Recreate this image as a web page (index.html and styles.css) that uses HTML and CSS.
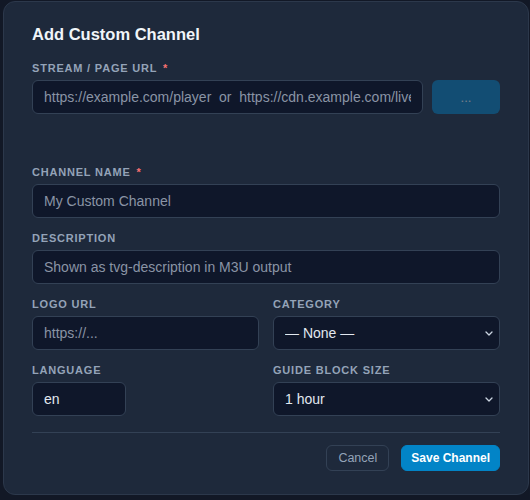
FILE: index.html
```html
<!DOCTYPE html>
<html lang="en">
<head>
    <meta charset="UTF-8">
    <meta name="viewport" content="width=device-width, initial-scale=1.0">
    <title>Add Custom Channel</title>
    <link rel="stylesheet" href="styles.css">
</head>
<body>
    <div class="backdrop">
        <div class="modal">
            <h2 class="modal-title">Add Custom Channel</h2>

            <div class="form">
                <div class="field">
                    <label class="field-label">Stream / Page URL <span class="req">*</span></label>
                    <div class="url-row">
                        <input type="text" class="input" placeholder="https://example.com/player  or  https://cdn.example.com/live">
                        <button class="btn-probe" disabled>...</button>
                    </div>
                    <!-- probe result goes here -->
                    <div class="probe-status"></div>
                </div>

                <div class="field">
                    <label class="field-label">Channel Name <span class="req">*</span></label>
                    <input type="text" class="input" placeholder="My Custom Channel">
                </div>

                <div class="field">
                    <label class="field-label">Description</label>
                    <input type="text" class="input" placeholder="Shown as tvg-description in M3U output">
                </div>

                <div class="grid-2">
                    <div class="field">
                        <label class="field-label">Logo URL</label>
                        <input type="text" class="input" placeholder="https://...">
                    </div>
                    <div class="field">
                        <label class="field-label">Category</label>
                        <select class="input select">
                            <option>— None —</option>
                        </select>
                    </div>
                    <div class="field">
                        <label class="field-label">Language</label>
                        <input type="text" class="input input-short" value="en">
                    </div>
                    <div class="field">
                        <label class="field-label">Guide Block Size</label>
                        <select class="input select">
                            <option>1 hour</option>
                        </select>
                    </div>
                </div>
            </div>

            <div class="modal-footer">
                <button class="btn btn-cancel">Cancel</button>
                <button class="btn btn-save">Save Channel</button>
            </div>
        </div>
    </div>
</body>
</html>
```

FILE: styles.css
```css
* {
    box-sizing: border-box;
}
body {
    margin: 0;
    background-color: #121826;
    font-family: "Liberation Sans", Arial, sans-serif;
    color: #e2e8f0;
}
.backdrop {
    width: 530px;
    height: 500px;
    padding: 1px 0 0 3px;
}
.modal {
    width: 526px;
    background: #1e293b;
    border: 1px solid #2c384b;
    border-radius: 12px;
    padding: 20px 28px 23px;
}
.modal-title {
    margin: 0 0 14px;
    font-size: 16.5px;
    line-height: 24px;
    font-weight: bold;
    color: #f1f5f9;
}
.form {
    display: flex;
    flex-direction: column;
    gap: 12px;
}
.field {
    display: flex;
    flex-direction: column;
}
.field-label {
    font-size: 11px;
    line-height: 16px;
    font-weight: bold;
    letter-spacing: 0.8px;
    text-transform: uppercase;
    color: #94a3b8;
    margin-bottom: 4px;
}
.req {
    color: #f87171;
    margin-left: 2px;
}
.input {
    height: 34px;
    width: 100%;
    background: #0f172a;
    border: 1px solid #334155;
    border-radius: 6px;
    padding: 0 11px;
    font-family: inherit;
    font-size: 14px;
    color: #e2e8f0;
    outline: none;
}
.input::placeholder {
    color: #8a94a5;
}
.input-short {
    width: 94px;
}
.select {
    appearance: none;
    -webkit-appearance: none;
    background-image: url("data:image/svg+xml;utf8,<svg xmlns='http://www.w3.org/2000/svg' width='8' height='5' viewBox='0 0 8 5'><path d='M1 1l3 3 3-3' fill='none' stroke='%23cbd5e1' stroke-width='1.3' stroke-linecap='round' stroke-linejoin='round'/></svg>");
    background-repeat: no-repeat;
    background-position: right 6px center;
    background-size: 8px 5px;
}
.url-row {
    display: flex;
    gap: 9px;
}
.url-row .input {
    flex: 1;
}
.btn-probe {
    width: 68px;
    height: 34px;
    flex-shrink: 0;
    border: none;
    border-radius: 6px;
    background: #0284c7;
    color: #ffffff;
    font-family: inherit;
    font-size: 13px;
    opacity: 0.4;
}
.probe-status {
    min-height: 38px;
}
.grid-2 {
    display: grid;
    grid-template-columns: 1fr 1fr;
    column-gap: 14px;
    row-gap: 12px;
}
.modal-footer {
    margin-top: 16px;
    border-top: 1px solid #334155;
    padding-top: 12px;
    display: flex;
    justify-content: flex-end;
    gap: 12px;
}
.btn {
    height: 26px;
    padding: 0 11px;
    border-radius: 6px;
    font-family: inherit;
    font-size: 12.5px;
    cursor: pointer;
}
.btn-cancel {
    background: transparent;
    border: 1px solid #334155;
    color: #94a3b8;
}
.btn-save {
    padding: 0 9px;
    background: #0284c7;
    border: 1px solid #0284c7;
    color: #ffffff;
    font-weight: bold;
    font-size: 12px;
}
```
